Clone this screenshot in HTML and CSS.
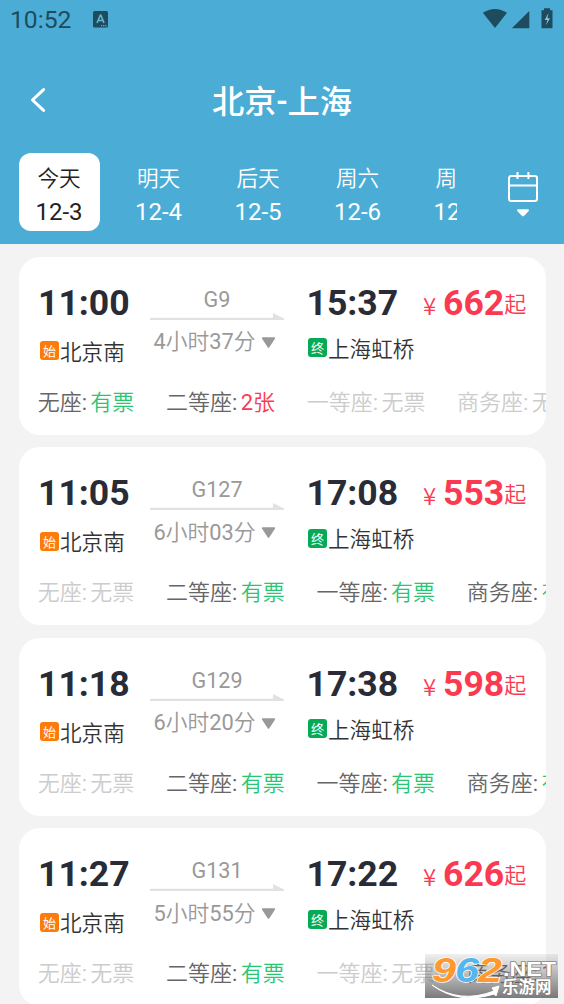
FILE: index.html
```html
<!DOCTYPE html>
<html lang="zh-CN">
<head>
<meta charset="utf-8">
<title>北京-上海</title>
<link rel="stylesheet" href="styles.css">
</head>
<body>
<header class="header">
  <div class="status">
    <span class="clock">10:52</span>
    <svg class="app-badge" width="15" height="17" viewBox="0 0 15 17"><rect width="15" height="16.5" rx="1.5" fill="#1f4b5e"/><path d="M4 12 7.3 4.3h.6L11 12M5.2 9.5h4.6" fill="none" stroke="#66b4d3" stroke-width="1.6"/><path d="M8 14.7h6" stroke="#66b4d3" stroke-width="1.2" stroke-dasharray="1.2 .9"/></svg>
    <svg class="status-icons" width="72" height="22" viewBox="0 0 72 22"><g fill="#1f4b5e"><path d="M.8 4.800Q13-3 25 4.800L13 20Z"/><path d="M47.300 3v17.300H29.800Z"/><path d="M59.500 2.200H62V.2h6v2h2.500v18.100h-11Z"/></g><path d="M66.500 5 62.700 12h2.700L64 17.300l4-7h-2.600Z" fill="#8ac4dc"/></svg>
  </div>
  <div class="nav">
    <svg class="back" width="18" height="26" viewBox="0 0 18 26"><path d="M14.600 2.600 3.500 13l11.100 10.400" fill="none" stroke="#fff" stroke-width="3" stroke-linecap="round" stroke-linejoin="round"/></svg>
    <h1 class="title">北京-上海</h1>
  </div>
  <div class="date-bar">
    <div class="dates">
      <div class="date active"><span>今天</span><b>12-3</b></div>
      <div class="date"><span>明天</span><b>12-4</b></div>
      <div class="date"><span>后天</span><b>12-5</b></div>
      <div class="date"><span>周六</span><b>12-6</b></div>
      <div class="date"><span>周日</span><b>12-7</b></div>
    </div>
    <svg class="calendar" width="32" height="48" viewBox="0 0 32 48"><rect x="2" y="5" width="28" height="25" rx="2.200" fill="none" stroke="#fff" stroke-width="2"/><path d="M2 14.400h28M10.500 1v7M21.400 1v7" stroke="#fff" stroke-width="2" fill="none"/><path d="M10.800 38.300h10.400q1.400.5.5 1.700l-4.500 4.700q-1.200 1-2.400 0L10.300 40q-.9-1.200.5-1.700Z" fill="#fff"/></svg>
  </div>
</header>
<main class="list" id="list"></main>
<div class="watermark">
  <svg width="133" height="44" viewBox="0 0 133 44">
    <defs><linearGradient id="shade" x1="0" y1="0" x2="0" y2="1"><stop offset="0" stop-color="#666" stop-opacity=".1"/><stop offset="1" stop-color="#555" stop-opacity=".78"/></linearGradient></defs>
    <rect width="133" height="44" fill="url(#shade)"/>
    <path d="M7 31Q35 50 69 37L67 34 74 32 71 42 69 40Q34 51 7 31Z" fill="#fff" stroke="#fff" stroke-width="1"/>
    <g class="mark-number"><text x="7" y="28" fill="#ff982e" textLength="24" lengthAdjust="spacingAndGlyphs">9</text><text x="30" y="28" fill="#55b5ed" textLength="24" lengthAdjust="spacingAndGlyphs">6</text><text x="53" y="28" fill="#ff982e" textLength="24" lengthAdjust="spacingAndGlyphs">2</text></g>
    <text class="mark-net" x="78" y="22" textLength="53" lengthAdjust="spacingAndGlyphs">.NET</text>
    <text class="mark-name" x="77" y="39">乐游网</text>
  </svg>
</div>
<script src="app.js"></script>
</body>
</html>
```
FILE: styles.css
```css
* { box-sizing: border-box; }
body {
  margin: 0;
  width: 564px;
  height: 1004px;
  overflow: hidden;
  position: relative;
  background: #f3f3f3;
  font-family: Roboto, "Noto Sans CJK SC DemiLight", "Noto Sans CJK SC Light", "Noto Sans CJK SC", sans-serif;
  font-size: 21.6px;
  font-weight: 400;
  color: #333;
  white-space: nowrap;
}
svg { display: block; flex: none; }
.header { height: 244px; background: #4badd6; color: #fff; }
.status { height: 40px; padding: 0 10px; display: flex; align-items: flex-start; color: #1f4b5e; }
.clock { font-size: 24.7px; line-height: 40px; width: 83px; }
.app-badge { margin-top: 11px; }
.status-icons { margin: 8px 0 0 auto; }
.nav { height: 113px; padding-top: 41px; display: grid; grid-template-columns: 60px 1fr 60px; }
.back { margin: 6px 0 0 29px; }
.title { margin: 0; text-align: center; font-family: Roboto, "Noto Sans CJK SC", sans-serif; font-size: 32.3px; line-height: 42px; font-weight: 500; }
.date-bar { display: flex; padding-left: 19px; }
.dates { width: 438px; display: flex; gap: 18.5px; overflow: hidden; }
.date { flex: 0 0 81px; height: 78px; padding: 9px 1px 0 0; text-align: center; border-radius: 12px; }
.date span { display: block; line-height: 33px; }
.date b { display: block; font-size: 24px; line-height: 34px; font-weight: 400; }
.active { background: #fff; color: #222; }
.calendar { margin: 18px 0 0 50px; }
.list { padding: 12.5px 18.5px 0 19px; display: grid; gap: 12.6px; }
.card { height: 178px; background: #fff; border-radius: 21px; overflow: hidden; padding-left: 19px; }
.trip { display: grid; grid-template-columns: 112px 134px 23px 116px 1fr; height: 128px; }
.time { height: 42px; margin-top: 25px; font-size: 35.6px; line-height: 42px; font-weight: 700; color: #292c36; }
.station { display: flex; align-items: center; height: 30px; margin-top: 11.5px; }
.arrive .time { margin-left: -.5px; }
.arrive .station { margin-top: 8.5px; }
.tag { width: 19px; height: 19px; margin: 1px 1px 0 2px; border-radius: 3px; background: #fc7b0a; color: #fff; font-family: "Noto Sans CJK SC", sans-serif; font-size: 13px; line-height: 19px; text-align: center; }
.arrive { grid-column: 4; }
.arrive .tag { margin-left: 1px; background: #06aa56; }
.route { padding-top: 28px; color: #999; text-align: center; }
.number { line-height: 29px; }
.arrow { margin-top: -1px; }
.duration { display: flex; align-items: center; font-size: 21.8px; line-height: 40px; padding-left: 3.5px; gap: 5px; margin-top: 1.5px; }
.duration svg { margin-left: .5px; }
.price { display: flex; align-items: baseline; color: #fb3a51; height: 42px; margin-top: 25px; line-height: 42px; }
.yen { width: 20px; font-size: 24px; font-family: "Noto Sans CJK SC DemiLight", "Noto Sans CJK SC Light", "Noto Sans CJK SC", sans-serif; }
.amount { font-size: 35.6px; font-weight: 700; }
.from { line-height: 37px; align-self: flex-start; padding-top: 4px; font-size: 22px; }
.seats { display: flex; gap: 31.7px; margin-left: -.3px; font-size: 22px; line-height: 35px; color: #666; }
.seat { display: flex; flex: none; gap: 3.3px; }
.none { color: #ccc; }
.available { color: #2ac572; }
.few { color: #fb3a51; }
.watermark { position: absolute; left: 425px; top: 954px; }
.mark-number { font: italic 700 35px "Liberation Sans", sans-serif; stroke: #fff; stroke-width: 1.4px; paint-order: stroke; }
.mark-net { font: 700 20px "Liberation Sans", sans-serif; fill: #fff; stroke: #888; stroke-width: 1.5px; paint-order: stroke; }
.mark-name { font: 700 16.5px "Noto Sans CJK SC", sans-serif; fill: #fff; stroke: #777; stroke-width: 1px; paint-order: stroke; }
```
FILE: app.js
```js
const trains = [
  ["11:00", "15:37", "G9", "4小时37分", "662", ["有票", "2张", "无票", "无票"]],
  ["11:05", "17:08", "G127", "6小时03分", "553", ["无票", "有票", "有票", "有票"]],
  ["11:18", "17:38", "G129", "6小时20分", "598", ["无票", "有票", "有票", "有票"]],
  ["11:27", "17:22", "G131", "5小时55分", "626", ["无票", "有票", "无票", "1张"]]
];
const names = ["无座", "二等座", "一等座", "商务座"];

function seat(value, i) {
  const none = value === "无票" ? " none" : "";
  const kind = none ? "" : value === "有票" ? "available" : "few";
  return `<div class="seat${none}"><span>${names[i]}:</span><span class="${kind}">${value}</span></div>`;
}

document.getElementById("list").innerHTML = trains.map(([from, to, no, length, price, seats]) => `
<article class="card">
  <div class="trip">
    <div class="depart"><div class="time">${from}</div><div class="station"><span class="tag">始</span>北京南</div></div>
    <div class="route">
      <div class="number">${no}</div>
      <svg class="arrow" width="134" height="8" viewBox="0 0 134 8"><path d="M0 4.800h123V0L134 5.500V7H0Z" fill="#e1e1e1"/></svg>
      <div class="duration">${length}<svg width="15" height="13" viewBox="0 0 14 12"><path d="M1.500 1h11q1.200.3.5 1.500L7.800 10.500q-.8 1-1.600 0L1 2.500Q.3 1.300 1.500 1Z" fill="#999"/></svg></div>
    </div>
    <div class="arrive"><div class="time">${to}</div><div class="station"><span class="tag">终</span>上海虹桥</div></div>
    <div class="price"><span class="yen">¥</span><span class="amount">${price}</span><span class="from">起</span></div>
  </div>
  <div class="seats">${seats.map(seat).join("")}</div>
</article>`).join("");
```
